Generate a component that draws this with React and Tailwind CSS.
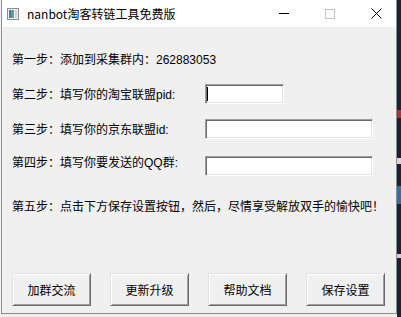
import React from "react";

const FONT = { fontFamily: "'Liberation Sans','Noto Sans CJK SC',sans-serif" };
const CJK = { fontFamily: "'Noto Sans CJK SC','Liberation Sans',sans-serif" };

function Input({ w, cursor }) {
  return (
    <div
      className={`${w} h-[20px] bg-white border border-t-[#a0a0a0] border-l-[#a0a0a0] border-b-white border-r-white shadow-[inset_1px_1px_0_#696969,inset_-1px_-1px_0_#e3e3e3] flex items-center`}
    >
      {cursor && <span className="ml-[1px] w-px h-[14px] bg-black" />}
    </div>
  );
}

function Btn({ children }) {
  return (
    <div
      className="w-[79px] h-[33px] bg-[#f0f0f0] border border-t-[#e3e3e3] border-l-[#e3e3e3] border-b-[#696969] border-r-[#696969] shadow-[inset_1px_1px_0_#ffffff,inset_-1px_-1px_0_#a0a0a0] flex items-center justify-center text-[12px] text-black leading-none"
      style={CJK}
    >
      {children}
    </div>
  );
}

export default function App() {
  return (
    <div className="w-[401px] h-[317px] flex bg-[#f0f0f0] overflow-hidden" style={FONT}>
      <div className="w-px h-full bg-[#f4f4f4]" />
      <div className="w-[396px] h-[314px] flex flex-col border-l border-r border-b border-[#8e8e8e] border-t-0">
        {/* Title bar */}
        <div className="h-[27px] bg-white flex items-center">
          <div className="pl-[5px] flex items-center">
            <svg width="12" height="12" viewBox="0 0 12 12">
              <rect x="0.5" y="0.5" width="11" height="11" fill="#f4f4f4" stroke="#8c8c8c" />
              <rect x="2" y="2" width="5" height="8" fill="#5f9e8f" />
              <rect x="2" y="2" width="2" height="8" fill="#3f7f9f" />
              <rect x="8" y="2" width="2" height="8" fill="#c9d3d6" />
            </svg>
          </div>
          <div className="ml-[8px] text-[12px] text-black leading-none" style={{ fontFamily: "'Noto Sans CJK SC','Open Sans',sans-serif" }}>
            nanbot淘客转链工具免费版
          </div>
          <div className="flex-1" />
          <div className="w-[46px] h-full flex items-center justify-center">
            <div className="w-[10px] h-px bg-black" />
          </div>
          <div className="w-[46px] h-full flex items-center justify-center">
            <div className="w-[10px] h-[10px] border border-[#c4c4c4]" />
          </div>
          <div className="w-[43px] h-full flex items-center pl-[18px]">
            <svg width="11" height="11" viewBox="0 0 11 11" className="-mt-[1px]">
              <path d="M0.5 0.5 L10.5 10.5 M10.5 0.5 L0.5 10.5" stroke="#000" strokeWidth="1" />
            </svg>
          </div>
        </div>

        {/* Body */}
        <div className="flex-1 bg-[#f0f0f0] flex flex-col pl-[10px] pt-[25px] pb-[7px] text-[12px] text-black">
          <div className="h-[16px] leading-[16px]">第一步：添加到采集群内：262883053</div>

          <div className="mt-[16px] flex items-start">
            <div className="w-[193px] mt-[3px] h-[16px] leading-[16px]">第二步：填写你的淘宝联盟pid:</div>
            <Input w="w-[79px]" cursor />
          </div>

          <div className="mt-[15px] flex items-start">
            <div className="w-[193px] mt-[3px] h-[16px] leading-[16px]">第三步：填写你的京东联盟id:</div>
            <Input w="w-[168px]" />
          </div>

          <div className="mt-[17px] flex items-start">
            <div className="w-[193px] -mt-[1px] h-[16px] leading-[16px]">第四步：填写你要发送的QQ群:</div>
            <Input w="w-[168px]" />
          </div>

          <div className="mt-[23px] h-[16px] leading-[16px]">
            第五步：点击下方保存设置按钮，然后，尽情享受解放双手的愉快吧！
          </div>

          <div className="mt-auto flex gap-[19px]">
            <Btn>加群交流</Btn>
            <Btn>更新升级</Btn>
            <Btn>帮助文档</Btn>
            <Btn>保存设置</Btn>
          </div>
        </div>
      </div>
      <div className="w-[4px] h-full flex flex-col bg-[#1c2236]">
        <div className="h-[110px]" />
        <div className="h-[8px] bg-[#b0303a]" />
        <div className="h-[40px]" />
        <div className="h-[6px] bg-[#d8d8d8]" />
        <div className="h-[22px]" />
        <div className="h-[18px] bg-[#2f6fb0]" />
        <div className="h-[50px]" />
        <div className="h-[4px] bg-[#d0d0d0]" />
      </div>
    </div>
  );
}
